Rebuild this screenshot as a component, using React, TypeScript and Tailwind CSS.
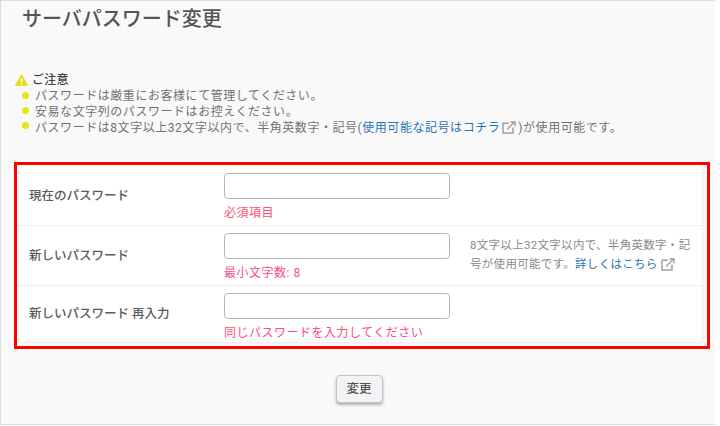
import React from "react";

const jp = { fontFamily: '"Roboto","Noto Sans CJK JP",sans-serif' };

function Ext({ className = "" }: { className?: string }) {
  return (
    <svg viewBox="0 0 14 13" className={"inline-block w-[14px] h-[13px] " + className} fill="none" stroke="#a0a0a0" strokeWidth="1.5">
      <path d="M7 2.2H1v9.8h10V6.5" />
      <path d="M5 8.5l7.5-7.5M8.5 1h4.5v4.2" />
    </svg>
  );
}

function Row({ label, error, hint, rowClass, labelClass, inputClass, line = true }: { label: string; error: string; hint?: React.ReactNode; rowClass: string; labelClass: string; inputClass: string; line?: boolean }) {
  return (
    <div className={"flex " + rowClass + (line ? " border-b border-[#ececec]" : "")}>
      <div className={"w-[207px] pl-[12px] text-[12.5px] leading-[18px] font-medium text-[#5a5a5a] " + labelClass}>{label}</div>
      <div className={"w-[226px] " + inputClass}>
        <div className="h-[26px] w-[226px] rounded-[4px] border border-[#b5b5b5] bg-white" />
        <div className="mt-[6px] text-[12px] leading-[16px] tracking-[0.5px] text-[#f8507a]">{error}</div>
      </div>
      {hint && <div className="ml-[20px] w-[224px] pt-[10px] text-[11.5px] leading-[19px] tracking-[0.3px] text-[#8a8a8a]">{hint}</div>}
    </div>
  );
}

const bullet = "mr-[6px] h-[7px] w-[7px] shrink-0 rounded-full bg-[#e6e617] ";

export default function App() {
  return (
    <div style={jp} className="h-[426px] w-[720px] overflow-hidden bg-white">
      <div className="h-[425px] w-[715px] border-l border-t border-b border-[#dcdcdc] bg-[#f9f9f9] pl-[13px]">
        <h1 className="pl-[8px] pt-[4px] text-[20px] leading-[28px] font-medium text-[#555]">サーバパスワード変更</h1>
        <div className="mt-[39px] text-[12px] leading-[16px] tracking-[0.55px] text-[#727272]">
          <div className="flex h-[15px] items-center pl-[1px] text-[12px] font-medium tracking-[0.3px] text-[#444]">
            <svg viewBox="0 0 13 12" className="mr-[4px] h-[12px] w-[13px]">
              <path d="M6.5 0.5L12.8 11.5H0.2Z" fill="#e3da12" stroke="#e3da12" strokeLinejoin="round" strokeWidth="0.6" />
              <rect x="5.8" y="3.8" width="1.5" height="4.4" fill="#fff" />
              <rect x="5.8" y="9" width="1.5" height="1.5" fill="#fff" />
            </svg>
            ご注意
          </div>
          <ul className="mt-[1px] pl-[8px]">
            <li className="flex h-[16px]">
              <span className={bullet + "mt-[4px]"} />
              パスワードは厳重にお客様にて管理してください。
            </li>
            <li className="flex h-[16px]">
              <span className={bullet + "mt-[3px]"} />
              安易な文字列のパスワードはお控えください。
            </li>
            <li className="flex h-[16px] whitespace-nowrap">
              <span className={bullet + "mt-[2px]"} />
              パスワードは8文字以上32文字以内で、半角英数字・記号(
              <span className="text-[#2a73b8]">使用可能な記号はコチラ</span>
              <Ext className="mx-[2px] mt-[1px]" />
              )が使用可能です。
            </li>
          </ul>
        </div>
        <div className="mt-[26px] h-[187px] w-[696px] border-[3px] border-[#ff0000]">
          <div className="h-[178px] w-[686px] rounded-[3px] border-r border-b border-[#ececec] bg-white">
            <Row rowClass="h-[61px]" labelClass="pt-[22px]" inputClass="pt-[8px]" label="現在のパスワード" error="必須項目" />
            <Row
              rowClass="h-[60px]"
              labelClass="pt-[21px]"
              inputClass="pt-[7px]"
              label="新しいパスワード"
              error="最小文字数: 8"
              hint={
                <>
                  <div className="whitespace-nowrap">8文字以上32文字以内で、半角英数字・記</div>
                  <div className="flex items-center whitespace-nowrap">
                    号が使用可能です。
                    <span className="text-[#2a73b8]">詳しくはこちら</span>
                    <Ext className="ml-[3px]" />
                  </div>
                </>
              }
            />
            <Row rowClass="h-[56px]" labelClass="pt-[19px]" inputClass="pt-[7px]" label="新しいパスワード 再入力" error="同じパスワードを入力してください" line={false} />
          </div>
        </div>
        <div className="mt-[26px] flex justify-center pr-[11px]">
          <button className="h-[28px] w-[47px] rounded-[4px] border border-[#c4c4c4] bg-[#f3f3f5] text-[12.5px] font-medium text-[#555] shadow-[0_2px_3px_rgba(0,0,0,0.3)]">
            変更
          </button>
        </div>
      </div>
    </div>
  );
}
